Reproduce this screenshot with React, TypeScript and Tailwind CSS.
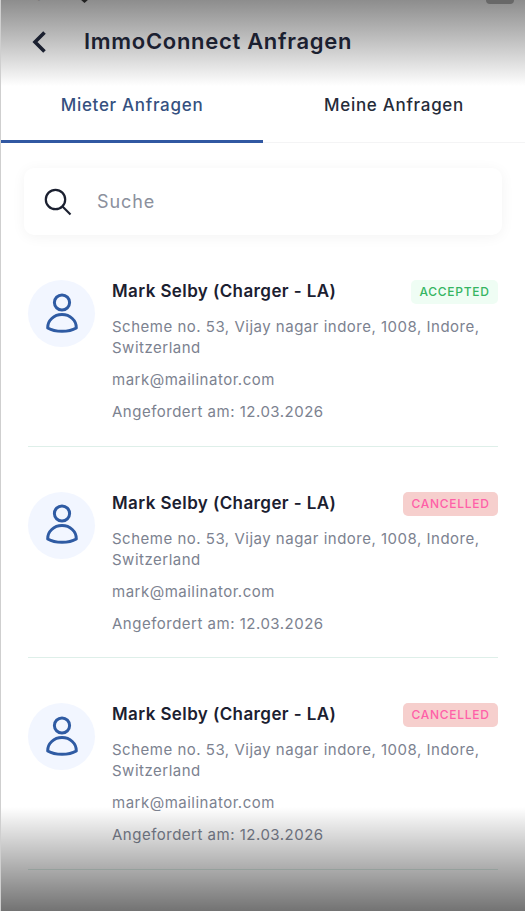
type Status = "ACCEPTED" | "CANCELLED";

const requests: { id: number; status: Status }[] = [
  { id: 1, status: "ACCEPTED" },
  { id: 2, status: "CANCELLED" },
  { id: 3, status: "CANCELLED" },
];

const badgeTone: Record<Status, string> = {
  ACCEPTED: "bg-[#effdf4] text-[#35b562]",
  CANCELLED: "bg-[#f6cfcd] text-[#ff5fa8]",
};

function UserIcon() {
  return (
    <svg width="34" height="42" viewBox="0 0 34 42" fill="none" stroke="#2f5ba3" strokeWidth="3">
      <circle cx="17" cy="9.5" r="7.6" />
      <path d="M2.7 35C2.4 27.5 9 21.6 17 21.6S31.600 27.500 31.300 35C27.500 37.200 22.500 38.300 17 38.300S6.500 37.200 2.700 35Z" strokeLinejoin="round" />
    </svg>
  );
}

function StatusBar() {
  return (
    <div className="flex h-1 items-end overflow-hidden text-[15px] leading-[18px] text-[#4a4a4a]">
      <span className="w-[72px] pl-[9px] whitespace-nowrap">No SIM</span>
      <svg className="ml-[7px] shrink-0" width="9" height="12" viewBox="0 0 9 12" fill="#222">
        <path d="M0 7h9L4.500 11Z" />
      </svg>
      <span className="ml-[144px] w-[65px] whitespace-nowrap">4:57 PM</span>
      <span className="ml-auto">➤</span>
      <span className="ml-1">68%</span>
      <span className="mr-[11px] ml-2 h-3 w-[28px] shrink-0 rounded-[4px] bg-[#686868]" />
    </div>
  );
}

function RequestItem({ status }: { status: Status }) {
  return (
    <li className="flex h-[211.500px] items-start border-b-[1.500px] border-[#deefe9] pt-[45px]">
      <div className="flex size-[67px] shrink-0 items-center justify-center rounded-full bg-[#f2f6ff]">
        <UserIcon />
      </div>
      <div className="ml-[17px] flex-1">
        <div className="flex h-6 items-center justify-between">
          <h2 className="text-[17px] font-semibold tracking-[0.4px] text-[#1b2030]">
            Mark Selby (Charger - LA)
          </h2>
          <span
            className={`flex h-6 items-center rounded-[5px] px-[8.500px] text-[12px] font-medium tracking-[0.7px] ${badgeTone[status]}`}
          >
            {status}
          </span>
        </div>
        <div className="mt-3 text-[15px] leading-[21px] tracking-[0.5px] text-[#7c8290]">
          <p>Scheme no. 53, Vijay nagar indore, 1008, Indore, Switzerland</p>
          <p className="mt-[11px]">mark@mailinator.com</p>
          <p className="mt-[11px]">Angefordert am: 12.03.2026</p>
        </div>
      </div>
    </li>
  );
}

export default function App() {
  return (
    <div className="relative h-[911px] w-[525px] overflow-hidden border-l border-[#cfcfcf] bg-white font-['Inter',sans-serif]">
      <header className="h-[86px] bg-linear-to-b from-[#8d8d8d] via-[#c4c4c4] to-white">
        <StatusBar />
        <div className="flex h-[75px] items-center pl-[30px]">
          <svg width="16" height="24" viewBox="0 0 16 24" fill="none" stroke="#1b2030" strokeWidth="3.600">
            <path d="M13.500 2.500L4 12l9.500 9.500" />
          </svg>
          <h1 className="ml-[37px] text-[22px] font-semibold tracking-[0.7px] text-[#1b2030]">
            ImmoConnect Anfragen
          </h1>
        </div>
      </header>

      <nav className="grid h-[57px] grid-cols-2 border-b border-[#f4f4f5] text-[17px] font-medium tracking-[0.7px]">
        <button className="-mb-px border-b-[3px] border-[#3158a2] pb-[15px] text-[#35507f]">
          Mieter Anfragen
        </button>
        <button className="pb-[17px] text-[#252b39]">Meine Anfragen</button>
      </nav>

      <label className="mx-[23px] mt-[25px] flex h-[67px] items-center rounded-[10px] bg-white pl-[20px] shadow-[0_2px_14px_rgba(0,0,0,0.05)]">
        <svg width="28" height="28" viewBox="0 0 28 28" fill="none" stroke="#1b2030" strokeWidth="2.200">
          <circle cx="11.500" cy="11.500" r="9.700" />
          <path d="M18.500 18.500l8 8" />
        </svg>
        <span className="ml-[25px] text-[18px] tracking-[0.9px] text-[#8b909d]">Suche</span>
      </label>

      <ul className="mx-[27px]">
        {requests.map((r) => (
          <RequestItem key={r.id} status={r.status} />
        ))}
      </ul>

      <div className="pointer-events-none absolute inset-x-0 bottom-0 h-[104px] bg-linear-to-b from-transparent to-black/55" />
    </div>
  );
}
